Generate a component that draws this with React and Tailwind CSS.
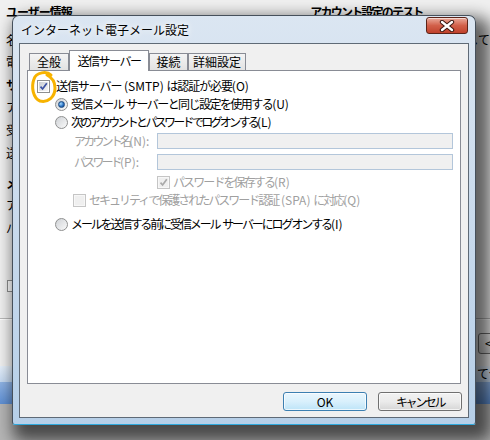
import React from 'react';

// Windows 7 風のチェックボックス
function CheckBox({ checked, disabled }) {
    return (
        <span className={`flex h-[13px] w-[13px] shrink-0 items-center justify-center border ${disabled ? 'border-[#c5c5c5] bg-[#f7f7f7]' : 'border-[#8e8f8f] bg-white'}`}>
            <span className={`flex h-[9px] w-[9px] items-center justify-center ${disabled ? 'bg-[#efefef]' : 'bg-linear-to-br from-[#c9cdd3] to-[#f6f6f6]'}`}>
                {checked && (
                    <svg width="9" height="9" viewBox="0 0 9 9">
                        <path d="M1.5 4.6 L3.6 7 L7.8 1.2" fill="none" stroke={disabled ? '#a9a9a9' : '#3b52a3'} strokeWidth="1.7" />
                    </svg>
                )}
            </span>
        </span>
    );
}

// ラジオボタン
function Radio({ checked }) {
    return (
        <span className="flex h-[13px] w-[13px] shrink-0 items-center justify-center rounded-full border border-[#8e8f8f] bg-linear-to-br from-[#cfd2d6] to-[#fafafa]">
            {checked && (
                <span className="h-[7px] w-[7px] rounded-full border border-[#1c4a80] bg-[radial-gradient(circle_at_35%_35%,#a8dcff,#2b73c4_55%,#12407a)]" />
            )}
        </span>
    );
}

function Tab({ children, active, width }) {
    if (active) {
        return (
            <div className={`relative z-10 -mb-px flex h-[21px] items-center justify-center border border-b-0 border-[#898c95] bg-white ${width}`}>
                {children}
            </div>
        );
    }
    return (
        <div className={`flex h-[17px] items-center justify-center border border-b-0 border-[#898c95] bg-linear-to-b from-[#f4f4f4] to-[#e2e2e2] ${width}`}>
            {children}
        </div>
    );
}

function BackgroundWindow() {
    return (
        <div className="flex h-full flex-col bg-[#f0f0f0] whitespace-nowrap">
            <div className="flex h-[318px]">
                {/* 左側: ユーザー情報 */}
                <div className="flex w-[345px] flex-col pl-[6px] pt-[4px] leading-[16px]">
                    <div className="h-[16px] font-bold tracking-[-1px]">ユーザー情報</div>
                    <div className="mt-[12px] h-[16px]">名前(Y):</div>
                    <div className="mt-[6px] h-[16px]">電子メール アドレス(E):</div>
                    <div className="mt-[7px] h-[16px] font-bold">サーバー情報</div>
                    <div className="mt-[6px] h-[16px]">アカウントの種類(A):</div>
                    <div className="mt-[7px] h-[16px]">受信メール サーバー(I):</div>
                    <div className="mt-[7px] h-[16px]">送信メール サーバー (SMTP)(O):</div>
                    <div className="mt-[15px] h-[16px] font-bold">メール サーバーへのログオン情報</div>
                    <div className="mt-[5px] h-[16px]">アカウント名(U):</div>
                    <div className="mt-[7px] h-[16px]">パスワード(P):</div>
                    <div className="ml-[1px] mt-[44px] h-[12px] w-[12px] border border-[#8e8f8f] bg-white" />
                </div>
                {/* 右側: アカウント設定のテスト */}
                <div className="flex flex-1 flex-col pl-[22px] pt-[4px] leading-[12px]">
                    <div className="h-[16px] leading-[16px] font-bold tracking-[-1.8px]">アカウント設定のテスト</div>
                    <div className="mt-[14px]">項目を入力したら、クリックして</div>
                    <div>のアカウントのテストを</div>
                    <div>行うことをお勧めします。</div>
                    <div className="ml-[26px] mt-[26px] flex h-[21px] w-[120px] items-center rounded-[3px] border border-[#707070] bg-linear-to-b from-[#f2f2f2] to-[#d8d8d8] pl-[11px]">
                        設定のテスト(T)...
                    </div>
                </div>
            </div>
            <div className="h-px bg-[#b9b9b9]" />
            <div className="h-px bg-white" />
            <div className="flex h-[46px] items-center pl-[478px]">
                <div className="flex h-[21px] w-[80px] items-center rounded-[3px] border border-[#707070] bg-linear-to-b from-[#f2f2f2] to-[#d8d8d8] pl-[6px]">
                    &lt; 戻る(B)
                </div>
            </div>
            <div className="flex h-[16px] items-center bg-linear-to-b from-[#e6f0fb] to-[#c5d9f1] pl-[477px] leading-[16px]">
                て切
            </div>
            <div className="h-[22px] bg-linear-to-b from-[#8fb3e4] to-[#5e8fd3]" />
            <div className="flex-1 bg-[#b5b5b5]" />
        </div>
    );
}

function Dialog() {
    return (
        <div className="absolute left-[12px] top-[15px] flex h-[410px] w-[464px] flex-col rounded-t-[7px] rounded-b-[3px] border border-[#46505b] border-b-[#2ea8dc] bg-linear-to-b from-[#dbe6f2] via-[#c9daec] to-[#b6cfe8] shadow-[8px_9px_16px_7px_rgba(0,0,0,0.6)]">
            {/* タイトルバー */}
            <div className="flex h-[27px] items-start justify-between pl-[8px] pr-[7px]">
                <div className="mt-[6px] leading-[16px] [text-shadow:0_0_6px_#ffffff,0_0_10px_#ffffff]">
                    インターネット電子メール設定
                </div>
                <div className="mt-[1px] flex h-[17px] w-[42px] items-center justify-center rounded-[3px] border border-[#5b2419] bg-linear-to-b from-[#e9a99b] via-[#d2604a] to-[#c0412b] shadow-[inset_0_1px_0_rgba(255,255,255,0.55)]">
                    <svg width="16" height="12" viewBox="0 0 16 12">
                        <path d="M3 2 L13 10 M13 2 L3 10" stroke="#3a1610" strokeWidth="4.4" strokeLinecap="round" />
                        <path d="M3 2 L13 10 M13 2 L3 10" stroke="#ffffff" strokeWidth="2.4" strokeLinecap="round" />
                    </svg>
                </div>
            </div>

            {/* クライアント領域 */}
            <div className="mx-[6px] mb-[6px] flex flex-1 flex-col border border-[#5f6a76] bg-[#f0f0f0] px-[7px] pt-[6px]">
                <div className="flex h-[20px] items-end pl-[2px]">
                    <Tab width="w-[40px]">全般</Tab>
                    <Tab width="w-[80px]" active>
                        <span className="tracking-[-1.5px]">送信サーバー</span>
                    </Tab>
                    <Tab width="w-[39px]">接続</Tab>
                    <Tab width="w-[58px]">詳細設定</Tab>
                </div>

                <div className="flex flex-1 flex-col border border-[#898c95] bg-white pl-[9px] pr-[7px] pt-[6px] leading-[16px] whitespace-pre">
                    <div className="flex h-[18px] items-center">
                        <CheckBox checked />
                        <span className="ml-[6px]">
                            <span className="tracking-[-1.1px]">送信サーバー</span> (SMTP) <span className="tracking-[-1.1px]">は認証が必要</span>(O)
                        </span>
                    </div>
                    <div className="ml-[18px] flex h-[18px] items-center gap-[3px]">
                        <Radio checked />
                        <span>
                            <span className="tracking-[-1.55px]">受信メール</span> <span className="tracking-[-1.55px]">サーバーと同じ設定を使用する</span>(U)
                        </span>
                    </div>
                    <div className="ml-[18px] flex h-[18px] items-center gap-[3px]">
                        <Radio />
                        <span>
                            <span className="tracking-[-2.7px]">次のアカウントとパスワードでログオンする</span>(L)
                        </span>
                    </div>
                    <div className="mt-[2px] flex h-[16px] items-center">
                        <span className="ml-[37px] w-[83px] text-[#a0a0a0]">
                            <span className="tracking-[-2.8px]">アカウント名</span>(N):
                        </span>
                        <div className="h-[16px] flex-1 border border-[#b3c6da] bg-[#f0f0f0]" />
                    </div>
                    <div className="mt-[5px] flex h-[16px] items-center">
                        <span className="ml-[37px] w-[83px] text-[#a0a0a0]">
                            <span className="tracking-[-2.8px]">パスワード</span>(P):
                        </span>
                        <div className="h-[16px] flex-1 border border-[#b3c6da] bg-[#f0f0f0]" />
                    </div>
                    <div className="ml-[120px] mt-[3px] flex h-[18px] items-center">
                        <CheckBox checked disabled />
                        <span className="ml-[3px] text-[#a0a0a0]">
                            <span className="tracking-[-1.9px]">パスワードを保存する</span>(R)
                        </span>
                    </div>
                    <div className="ml-[36px] flex h-[18px] items-center">
                        <CheckBox disabled />
                        <span className="ml-[3px] text-[#a0a0a0]">
                            <span className="tracking-[-2px]">セキュリティで保護されたパスワード認証</span> (SPA) <span className="tracking-[-2px]">に対応</span>(Q)
                        </span>
                    </div>
                    <div className="ml-[18px] mt-[6px] flex h-[18px] items-center gap-[3px]">
                        <Radio />
                        <span>
                            <span className="tracking-[-2.1px]">メールを送信する前に受信メール</span> <span className="tracking-[-2.1px]">サーバーにログオンする</span>(I)
                        </span>
                    </div>
                </div>

                {/* OK / キャンセル */}
                <div className="-mr-px mb-[6px] mt-[8px] flex justify-end gap-[11px]">
                    <button className="flex h-[19px] w-[84px] items-center justify-center rounded-[3px] border border-[#3c7fb1] bg-linear-to-b from-[#eaf6fd] via-[#d9f0fc] to-[#bde4f8] shadow-[inset_0_0_0_1px_rgba(255,255,255,0.7)]">
                        OK
                    </button>
                    <button className="flex h-[19px] w-[84px] items-center justify-center rounded-[3px] border border-[#707070] bg-linear-to-b from-[#f2f2f2] via-[#ebebeb] to-[#d6d6d6] shadow-[inset_0_0_0_1px_rgba(255,255,255,0.7)]">
                        <span className="tracking-[-2.4px]">キャンセル</span>
                    </button>
                </div>
            </div>
        </div>
    );
}

export default function App() {
    return (
        <div className="relative h-[440px] w-[490px] overflow-hidden font-['Noto_Sans_CJK_JP',sans-serif] text-[12px] text-black">
            <BackgroundWindow />
            <Dialog />
            {/* 手書きの注釈 (オレンジの丸) */}
            <svg className="absolute left-[28px] top-[68px]" width="32" height="40" viewBox="0 0 32 40">
                <path
                    d="M23 7 C19 3, 8 4, 6 11 C3 19, 5 30, 12 33 C20 35, 27 29, 27 20 C27 14, 25 10, 19 7"
                    fill="none"
                    stroke="#f7b300"
                    strokeWidth="3"
                    strokeLinecap="round"
                />
            </svg>
        </div>
    );
}
